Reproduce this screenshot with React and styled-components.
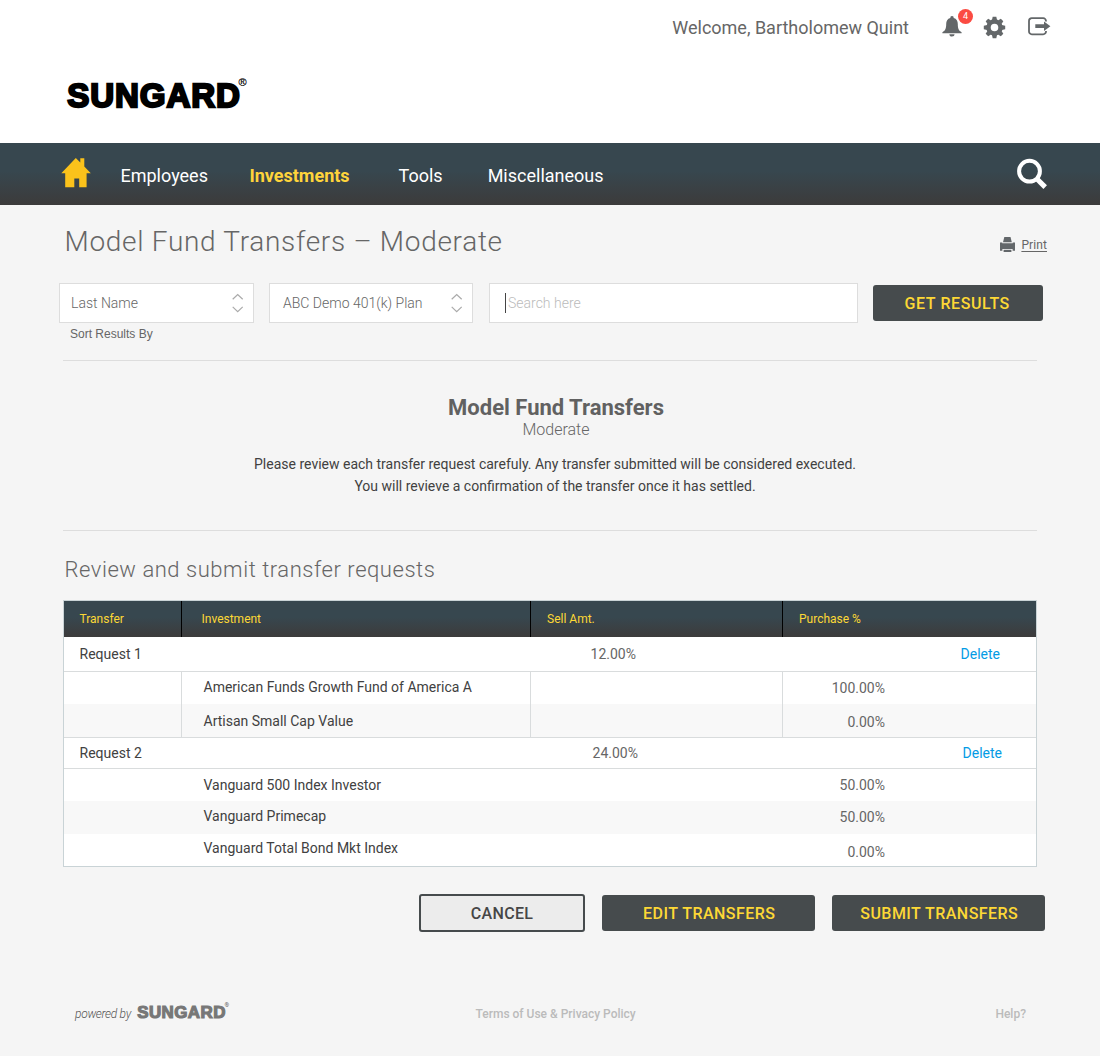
import React from 'react';
import styled, { createGlobalStyle } from 'styled-components';

const GlobalStyle = createGlobalStyle`
  * { box-sizing: border-box; }
  body {
    margin: 0;
    background: #f5f5f5;
    color: #414141;
    font-family: Roboto, "Liberation Sans", sans-serif;
    font-size: 14px;
  }
  h1, h2, h3, p { margin: 0; font-weight: 300; }
  button { font-family: inherit; cursor: pointer; }
  svg { display: block; overflow: visible; }
`;

const barGradient = 'linear-gradient(to bottom, #37474f 0%, #37474f 45%, #3a4145 72%, #3c3b3b 100%)';

const Page = styled.div`
  width: 1100px;
  min-height: 1056px;
  display: flex;
  flex-direction: column;
`;

const Header = styled.header`
  height: 143px;
  background: #fff;
`;

const UserBar = styled.div`
  display: flex;
  justify-content: flex-end;
  align-items: flex-start;
  height: 54px;
  padding: 0 49px 0 0;
`;

const Welcome = styled.span`
  color: #666;
  font-size: 18px;
  line-height: 22px;
  margin: 17px 33px 0 0;
`;

const IconButton = styled.a`
  position: relative;
  display: block;
  color: #636769;
  margin: ${p => p.$top}px ${p => p.$right || 0}px 0 0;
`;

const Badge = styled.span`
  position: absolute;
  top: -7px;
  right: -11px;
  width: 15px;
  height: 15px;
  border-radius: 50%;
  background: #fb4b42;
  color: #fff;
  font-size: 9px;
  line-height: 15px;
  text-align: center;
`;

const BrandRow = styled.div`
  padding: 22px 0 0 65px;
`;

const NavBar = styled.nav`
  display: flex;
  align-items: flex-start;
  height: 62px;
  padding: 0 52px 0 61px;
  background: ${barGradient};
`;

const HomeLink = styled.a`
  margin: 15px 29.5px 0 0;
`;

const NavLink = styled.a`
  color: ${p => (p.$active ? '#ffd43b' : '#fff')};
  font-size: 18px;
  font-weight: ${p => (p.$active ? 700 : 400)};
  line-height: 22px;
  margin: 22px ${p => p.$gap}px 0 0;
`;

const SearchLink = styled.a`
  margin: 15px 0 0 auto;
`;

const Main = styled.main`
  padding: 0 55px 0 59px;
`;

const TitleRow = styled.div`
  display: flex;
  justify-content: space-between;
  height: 78px;
  padding: 20px 0 0 5.5px;
`;

const Title = styled.h1`
  color: #666;
  font-size: 28px;
  line-height: 34px;
  letter-spacing: 0.7px;
`;

const PrintLink = styled.a`
  display: flex;
  align-items: flex-start;
  gap: 6px;
  height: 20px;
  margin: 11px -2px 0 0;
  color: #666;
  font-size: 12px;
  line-height: 18px;
  letter-spacing: 0.1px;

  span { text-decoration: underline; text-underline-offset: 2px; text-decoration-thickness: 1px; }
  svg { margin-top: 1px; }
`;

const Filters = styled.div`
  display: flex;
  align-items: flex-start;
  height: 77px;
`;

const Field = styled.div`
  width: ${p => p.$width}px;
  margin-right: ${p => p.$gap}px;
`;

const Box = styled.div`
  display: flex;
  align-items: center;
  height: 40px;
  padding: 0 9px 0 ${p => p.$indent}px;
  border: 1px solid #ddd;
  background: #fff;
  color: #666;
  font-weight: 300;

  svg { margin-left: auto; }
`;

const Caret = styled.i`
  width: 1px;
  height: 20px;
  margin-right: 2px;
  background: #444;
`;

const Placeholder = styled.span`
  color: #bbb;
`;

const Hint = styled.div`
  padding-left: 11px;
  color: #666;
  font: 12px/22px "Liberation Sans", Arial, sans-serif;
`;

const Button = styled.button`
  width: ${p => p.$width}px;
  height: ${p => (p.$outline ? 38 : 36)}px;
  margin-top: ${p => (p.$outline ? 0 : p.$top || 0)}px;
  padding: 0 ${p => p.$padRight || 0}px 0 ${p => p.$padLeft || 0}px;
  border: ${p => (p.$outline ? '2px solid #464b4d' : '0')};
  border-radius: 3px;
  background: ${p => (p.$outline ? '#ececec' : '#464b4d')};
  color: ${p => (p.$outline ? '#464646' : '#fdd835')};
  font-size: 16px;
  font-weight: 500;
  letter-spacing: ${p => p.$spacing || 0.46}px;
`;

const Section = styled.section`
  margin: 0 8px 0 4px;
  border-top: 1px solid #ddd;
`;

const Intro = styled(Section)`
  height: 170px;
  padding: 34px 0 0 10px;
  text-align: center;
`;

const IntroTitle = styled.h2`
  padding-left: 2px;
  color: #616161;
  font-size: 22px;
  font-weight: 700;
  line-height: 26px;
`;

const IntroSub = styled.p`
  padding-left: 2px;
  color: #666;
  font-size: 16px;
  line-height: 18px;
`;

const IntroText = styled.p`
  margin-top: 14px;
  font-weight: 400;
  line-height: 22px;
`;

const SectionTitle = styled.h2`
  padding: 25px 0 0 1.5px;
  height: 69px;
  color: #666;
  font-size: 22px;
  line-height: 28px;
  letter-spacing: 0.545px;
`;

const Table = styled.div`
  border: 1px solid #c9d3d6;
  background: #fff;
`;

const Row = styled.div`
  display: grid;
  grid-template-columns: 118px 349px 252px 1fr;
  height: ${p => p.$height}px;
  background: ${p => (p.$striped ? '#f8f8f8' : '#fff')};
  border-bottom: ${p => (p.$line ? '1px solid #d9dcdd' : '0')};
`;

const HeadRow = styled(Row)`
  background: ${barGradient};
  color: #fdd835;
  font-size: 12px;
`;

const Cell = styled.div`
  display: flex;
  align-items: center;
  padding-left: ${p => p.$indent || 0}px;
  border-right: ${p => (p.$divider ? `1px solid ${p.$divider}` : '0')};
`;

const Label = styled.span`
  margin-top: ${p => (p.$drop || 0) * 2}px;
`;

const Amount = styled.span`
  width: ${p => p.$width}px;
  margin-top: ${p => (p.$drop || 0) * 2}px;
  color: #666;
  text-align: right;
`;

const DeleteLink = styled.a`
  margin: 0 ${p => p.$inset}px 0 auto;
  color: #039be5;
`;

const Actions = styled.div`
  display: flex;
  justify-content: flex-end;
  gap: 17px;
  padding-top: 27px;
`;

const Footer = styled.footer`
  display: flex;
  align-items: flex-start;
  justify-content: space-between;
  padding: 70px 74px 0 75px;
  color: #bbb;
  font-size: 12px;
  font-weight: 500;
  line-height: 24px;
`;

const Powered = styled.div`
  display: flex;
  gap: 5px;
  width: 340px;
  height: 24px;
  color: #777;

  svg { margin-top: 0; }
`;

const PoweredText = styled.em`
  font-weight: 300;
  color: #555;
  width: 56px;
  letter-spacing: -0.3px;
  white-space: nowrap;
`;

const Terms = styled.a`
  margin: 0 auto 0 60.5px;
`;

const Logo = ({ width, color }) => (
  <svg width={width} height={width * 36 / 184} viewBox="0 0 184 36" fill={color}>
    <text x="2" y="30.800" fontFamily="Liberation Sans, Arial, sans-serif" fontWeight="700" fontSize="34"
      transform="translate(0.300 0)" textLength="173.500" lengthAdjust="spacingAndGlyphs"
      letterSpacing="0.900" stroke={color} strokeWidth="2.300">SUNGARD</text>
    <text x="173.600" y="10" fontFamily="Liberation Sans, sans-serif" fontSize="11" stroke={color} strokeWidth="0.200">®</text>
  </svg>
);

const BellIcon = () => (
  <svg width="20" height="21" viewBox="0 0 20 21" fill="currentColor">
    <path d="M10 0a1.700 1.700 0 0 1 1.700 1.900C14.600 2.700 15.800 5 15.800 8c0 4.800 1 6.500 3.800 8.300v1H.4v-1C3.200 14.500 4.200 12.800 4.200 8c0-3 1.200-5.300 4.100-6.100A1.700 1.700 0 0 1 10 0z" />
    <path d="M7.400 18.200h5.200a2.600 2.300 0 0 1-5.200 0z" />
  </svg>
);

const GearIcon = () => (
  <svg width="22" height="22" viewBox="-10.500 -10.500 22 22">
    <circle r="6" fill="none" stroke="currentColor" strokeWidth="4.400" />
    <g fill="currentColor">
      {[0, 45, 90, 135, 180, 225, 270, 315].map(a => (
        <path key={a} d="M-2.500-7.400L-1.800-10.700h3.600L2.500-7.400z" transform={`rotate(${a})`} />
      ))}
    </g>
  </svg>
);

const LogoutIcon = () => (
  <svg width="23" height="19" viewBox="0 0 23 19">
    <path d="M18 4.500V4a2.800 2.800 0 0 0-2.800-2.800H3.800A2.800 2.800 0 0 0 1 4v10.500a2.800 2.800 0 0 0 2.800 2.800h11.400A2.800 2.800 0 0 0 18 14.500v-.500"
      fill="none" stroke="currentColor" strokeWidth="1.800" />
    <path d="M7.300 7.300h8.700V4.500l6.400 4.700-6.400 4.700v-2.800H7.300z" fill="currentColor" />
  </svg>
);

const HomeIcon = () => (
  <svg width="30" height="30" viewBox="0 0 30 30" fill="#fbc21b">
    <path d="M14.800.1L19.300 4.600V.3h4v8.300l6.500 6.700h-4.200v13.900h-7.400v-8.800h-4.900v8.800H4.200V15.300H.3z" />
  </svg>
);

const SearchIcon = () => (
  <svg width="32" height="32" viewBox="0 0 32 32" fill="none" stroke="#fff">
    <circle cx="13.500" cy="13.200" r="10.400" strokeWidth="4" />
    <path d="M20.500 20.500l8.700 8.600" strokeWidth="5" />
  </svg>
);

const PrinterIcon = () => (
  <svg width="15" height="15" viewBox="0 0 15 15" fill="#63676a">
    <path d="M4.300 0h6.200l1.300 5.200H3z" />
    <path d="M0 5.400h2.300v.900h10.400v-.900H15v8.400h-2.400v-1.800H2.400v1.800H0z" />
    <path d="M3.600 12.800h7.800V15H3.600z" />
  </svg>
);

const Chevrons = () => (
  <svg width="13" height="20" viewBox="0 0 13 20" fill="none" stroke="#aaa" strokeWidth="1.200">
    <path d="M1.700 6.300l5-4.800 5 4.800M1.700 13.900l5 4.800 5-4.800" />
  </svg>
);

const lineColor = '#d9dcdd';

const requests = [
  {
    name: 'Request 1', height: 35, sell: '12.00%', sellWidth: 105, inset: 36, dividers: true,
    funds: [
      { name: 'American Funds Growth Fund of America A', pct: '100.00%', height: 32, drop: -1, pctDrop: 0 },
      { name: 'Artisan Small Cap Value', pct: '0.00%', height: 34, drop: 0, pctDrop: 1 },
    ],
  },
  {
    name: 'Request 2', height: 31, sell: '24.00%', sellWidth: 107, inset: 34, dividers: false,
    funds: [
      { name: 'Vanguard 500 Index Investor', pct: '50.00%', height: 32, drop: 0, pctDrop: 0 },
      { name: 'Vanguard Primecap', pct: '50.00%', height: 33, drop: -2, pctDrop: -1 },
      { name: 'Vanguard Total Bond Mkt Index', pct: '0.00%', height: 32, drop: -2, pctDrop: 2 },
    ],
  },
];

function RequestRows({ request }) {
  const divider = request.dividers ? lineColor : undefined;
  return (
    <>
      <Row $height={request.height} $line>
        <Cell $indent={15.5}>{request.name}</Cell>
        <Cell />
        <Cell><Amount $width={request.sellWidth}>{request.sell}</Amount></Cell>
        <Cell><DeleteLink $inset={request.inset}>Delete</DeleteLink></Cell>
      </Row>
      {request.funds.map((fund, i) => (
        <Row key={fund.name} $height={fund.height} $striped={i % 2 === 1}
          $line={request.dividers && i === request.funds.length - 1}>
          <Cell $divider={divider} />
          <Cell $divider={divider} $indent={21.5}><Label $drop={fund.drop}>{fund.name}</Label></Cell>
          <Cell $divider={divider} />
          <Cell><Amount $width={102} $drop={fund.pctDrop}>{fund.pct}</Amount></Cell>
        </Row>
      ))}
    </>
  );
}

export default function App() {
  return (
    <Page>
      <GlobalStyle />
      <Header>
        <UserBar>
          <Welcome>Welcome, Bartholomew Quint</Welcome>
          <IconButton $top={16} $right={22}><BellIcon /><Badge>4</Badge></IconButton>
          <IconButton $top={17} $right={22}><GearIcon /></IconButton>
          <IconButton $top={17}><LogoutIcon /></IconButton>
        </UserBar>
        <BrandRow><Logo width={184} color="#000" /></BrandRow>
      </Header>
      <NavBar>
        <HomeLink><HomeIcon /></HomeLink>
        <NavLink $gap={41.5}>Employees</NavLink>
        <NavLink $gap={49} $active>Investments</NavLink>
        <NavLink $gap={45}>Tools</NavLink>
        <NavLink $gap={0}>Miscellaneous</NavLink>
        <SearchLink><SearchIcon /></SearchLink>
      </NavBar>
      <Main>
        <TitleRow>
          <Title>Model Fund Transfers – Moderate</Title>
          <PrintLink><PrinterIcon /><span>Print</span></PrintLink>
        </TitleRow>
        <Filters>
          <Field $width={195} $gap={15}>
            <Box $indent={11}>Last Name<Chevrons /></Box>
            <Hint>Sort Results By</Hint>
          </Field>
          <Field $width={204} $gap={16}>
            <Box $indent={13}>ABC Demo 401(k) Plan<Chevrons /></Box>
          </Field>
          <Field $width={369} $gap={15}>
            <Box $indent={15}><Caret /><Placeholder>Search here</Placeholder></Box>
          </Field>
          <Button $width={170} $top={2} $spacing={0.6} $padRight={1.5}>GET RESULTS</Button>
        </Filters>
        <Intro>
          <IntroTitle>Model Fund Transfers</IntroTitle>
          <IntroSub>Moderate</IntroSub>
          <IntroText>
            Please review each transfer request carefuly. Any transfer submitted will be considered executed.<br />
            You will revieve a confirmation of the transfer once it has settled.
          </IntroText>
        </Intro>
        <Section>
          <SectionTitle>Review and submit transfer requests</SectionTitle>
          <Table>
            <HeadRow $height={36}>
              <Cell $indent={15.5} $divider="#000">Transfer</Cell>
              <Cell $indent={19.5} $divider="#000">Investment</Cell>
              <Cell $indent={16} $divider="#000">Sell Amt.</Cell>
              <Cell $indent={16}>Purchase %</Cell>
            </HeadRow>
            {requests.map(r => <RequestRows key={r.name} request={r} />)}
          </Table>
        </Section>
        <Actions>
          <Button $width={166} $outline $spacing={0.3}>CANCEL</Button>
          <Button $width={213} $top={1} $padLeft={1.5}>EDIT TRANSFERS</Button>
          <Button $width={213} $top={1} $padLeft={1.5}>SUBMIT TRANSFERS</Button>
        </Actions>
      </Main>
      <Footer>
        <Powered>
          <PoweredText>powered by</PoweredText>
          <Logo width={94} color="#777" />
        </Powered>
        <Terms>Terms of Use &amp; Privacy Policy</Terms>
        <a>Help?</a>
      </Footer>
    </Page>
  );
}
